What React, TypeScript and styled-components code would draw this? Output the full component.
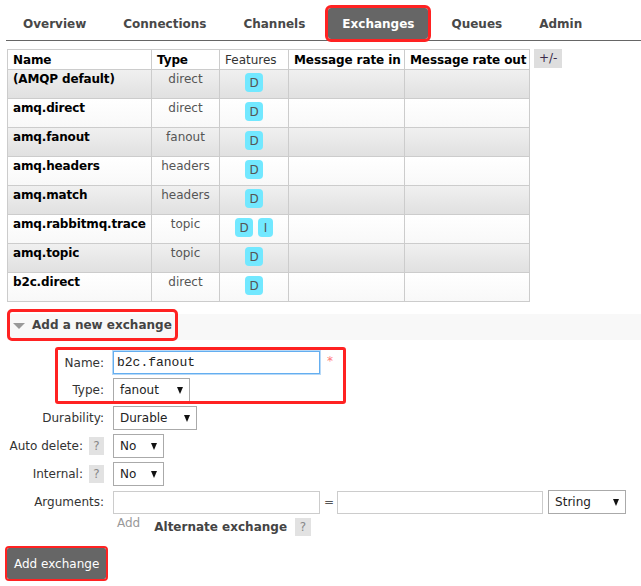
import React from 'react';
import styled, { createGlobalStyle } from 'styled-components';

const GlobalStyle = createGlobalStyle`
  html, body { margin: 0; padding: 0; background: #fff; }
  body {
    font-family: "DejaVu Sans", Verdana, sans-serif;
    font-size: 12px;
    color: #484848;
  }
  * { box-sizing: border-box; }
`;

const Page = styled.div`
  width: 641px;
  height: 586px;
  overflow: hidden;
`;

const Nav = styled.ul`
  list-style: none;
  margin: 0 0 0 6px;
  padding: 8px 0 0 3px;
  height: 41px;
  display: flex;
  align-items: flex-start;
  gap: 9px;
  border-bottom: 1px solid #666;
`;

const Tab = styled.li<{ $active?: boolean }>`
  height: 31px;
  line-height: 33px;
  padding: 0 14px;
  font-weight: bold;
  color: ${(p) => (p.$active ? '#fff' : '#484848')};
  background: ${(p) => (p.$active ? '#666' : 'transparent')};
  outline: ${(p) => (p.$active ? '3px solid #f22' : 'none')};
  border-radius: ${(p) => (p.$active ? '3px' : '0')};
`;

const TableArea = styled.div`
  display: flex;
  align-items: flex-start;
  gap: 4px;
  margin: 8px 0 0 7px;
`;

const Table = styled.table`
  border-collapse: collapse;
  table-layout: fixed;
  width: 523px;
`;

const HeadCell = styled.th<{ $plain?: boolean }>`
  border: 1px solid #ccc;
  padding: 0 5px;
  height: 20px;
  text-align: left;
  font-weight: ${(p) => (p.$plain ? 'normal' : 'bold')};
  color: ${(p) => (p.$plain ? '#333' : '#000')};
  letter-spacing: ${(p) => (p.$plain ? '0' : '-0.1px')};
  white-space: nowrap;
  background: #fff;
`;

const Row = styled.tr<{ $alt: boolean }>`
  background: ${(p) =>
    p.$alt
      ? 'linear-gradient(to bottom, #f0f0f0 0%, #e0e0e0 100%)'
      : 'linear-gradient(to bottom, #ffffff 0%, #f8f8f8 100%)'};
`;

const Cell = styled.td<{ $align?: string }>`
  border: 1px solid #ccc;
  height: 29px;
  padding: 2px 5px 0;
  vertical-align: top;
  text-align: ${(p) => p.$align || 'left'};
`;

const NameText = styled.span`
  font-weight: bold;
  color: #000;
  letter-spacing: -0.15px;
  white-space: nowrap;
`;

const TypeText = styled.span`
  color: #555;
`;

const Badges = styled.div`
  display: flex;
  justify-content: center;
  gap: 5px;
  padding-top: 1px;
`;

const Badge = styled.span<{ $w: number }>`
  display: inline-flex;
  align-items: center;
  justify-content: center;
  width: ${(p) => p.$w}px;
  height: 19px;
  border-radius: 4px;
  background: #72e8ff;
  color: #555;
`;

const ToggleCols = styled.span`
  background: #dedede;
  color: #3a2a4a;
  height: 19px;
  line-height: 19px;
  padding: 0 5px;
`;

const SectionBar = styled.div`
  display: flex;
  height: 26px;
  margin: 12px 0 0 7px;
  background: #f8f8f8;
`;

const SectionTitle = styled.h2`
  margin: -2px 0 0 3px;
  height: 26px;
  padding: 0 3px 0 3px;
  display: flex;
  align-items: center;
  gap: 7px;
  font-size: 12px;
  font-weight: bold;
  color: #444;
  outline: 3px solid #f22;
  border-radius: 2px;
`;

const Caret = styled.span`
  width: 0;
  height: 0;
  border-left: 6px solid transparent;
  border-right: 6px solid transparent;
  border-top: 6px solid #999;
  margin-top: 2px;
`;

const Form = styled.div`
  display: flex;
  flex-direction: column;
  gap: 4px;
  margin-top: 11px;
`;

const HighlightGroup = styled.div`
  position: relative;
  display: flex;
  flex-direction: column;
  gap: 4px;
  &::after {
    content: '';
    position: absolute;
    left: 55px;
    top: -4px;
    width: 285px;
    bottom: -2px;
    border: 3px solid #f22;
    border-radius: 3px;
    pointer-events: none;
  }
`;

const FormRow = styled.div`
  display: grid;
  grid-template-columns: 104px auto;
  column-gap: 9px;
  align-items: center;
  min-height: 23px;
`;

const Label = styled.div`
  display: flex;
  justify-content: flex-end;
  align-items: center;
  gap: 6px;
  color: #333;
  white-space: nowrap;
`;

const Controls = styled.div`
  display: flex;
  align-items: center;
`;

const NameInput = styled.input`
  width: 207px;
  height: 23px;
  border: 1px solid #64aef0;
  box-shadow: 0 0 0 1px #b7d9f7;
  padding: 0 3px;
  font-family: "Liberation Mono", "Courier New", monospace;
  font-size: 13px;
  color: #222;
  outline: none;
`;

const TextInput = styled.input<{ $w: number }>`
  width: ${(p) => p.$w}px;
  height: 23px;
  border: 1px solid #ccc;
  padding: 0 3px;
  font-family: "DejaVu Sans", Verdana, sans-serif;
  font-size: 12px;
  outline: none;
`;

const Required = styled.span`
  align-self: flex-start;
  margin: 3px 0 0 7px;
  color: #f77;
  font-size: 12px;
`;

const Select = styled.div<{ $w: number }>`
  width: ${(p) => p.$w}px;
  height: 24px;
  border: 1px solid #aaa;
  background: #fff;
  display: flex;
  align-items: center;
  justify-content: space-between;
  padding: 0 6px;
  color: #222;
`;

const Arrow = styled.span`
  width: 0;
  height: 0;
  border-left: 3.5px solid transparent;
  border-right: 3.5px solid transparent;
  border-top: 7px solid #111;
`;

const Help = styled.span<{ $w?: number }>`
  display: inline-flex;
  align-items: center;
  justify-content: center;
  width: ${(p) => p.$w || 15}px;
  height: 18px;
  background: #e2e2e2;
  color: #888;
`;

const Equals = styled.span`
  margin: 0 3px 0 4px;
  color: #555;
`;

const Spaced = styled.div`
  margin-left: 5px;
`;

const ExtrasRow = styled.div`
  display: flex;
  align-items: center;
  height: 19px;
  margin-top: 3px;
  padding-left: 117px;
`;

const AddLink = styled.span`
  align-self: flex-start;
  margin-top: -1px;
  color: #999;
`;

const AltLabel = styled.span`
  margin: 0 8px 0 14px;
  font-weight: bold;
  color: #444;
`;

const SubmitButton = styled.button`
  margin: 12px 0 0 7px;
  height: 31px;
  padding: 0 7px;
  border: 0;
  border-radius: 2px;
  background: #666;
  color: #fff;
  font-family: "DejaVu Sans", Verdana, sans-serif;
  font-size: 12px;
  outline: 2px solid #f22;
  outline-offset: 0;
`;

const tabs = ['Overview', 'Connections', 'Channels', 'Exchanges', 'Queues', 'Admin'];

const exchanges: { name: string; type: string; features: string[] }[] = [
  { name: '(AMQP default)', type: 'direct', features: ['D'] },
  { name: 'amq.direct', type: 'direct', features: ['D'] },
  { name: 'amq.fanout', type: 'fanout', features: ['D'] },
  { name: 'amq.headers', type: 'headers', features: ['D'] },
  { name: 'amq.match', type: 'headers', features: ['D'] },
  { name: 'amq.rabbitmq.trace', type: 'topic', features: ['D', 'I'] },
  { name: 'amq.topic', type: 'topic', features: ['D'] },
  { name: 'b2c.direct', type: 'direct', features: ['D'] },
];

function SelectBox({ value, w }: { value: string; w: number }) {
  return (
    <Select $w={w}>
      <span>{value}</span>
      <Arrow />
    </Select>
  );
}

export default function App() {
  return (
    <Page>
      <GlobalStyle />
      <Nav>
        {tabs.map((t) => (
          <Tab key={t} $active={t === 'Exchanges'}>
            {t}
          </Tab>
        ))}
      </Nav>

      <TableArea>
        <Table>
          <colgroup>
            <col style={{ width: 144 }} />
            <col style={{ width: 68 }} />
            <col style={{ width: 69 }} />
            <col style={{ width: 116 }} />
            <col style={{ width: 125 }} />
          </colgroup>
          <thead>
            <tr>
              <HeadCell>Name</HeadCell>
              <HeadCell>Type</HeadCell>
              <HeadCell $plain>Features</HeadCell>
              <HeadCell>Message rate in</HeadCell>
              <HeadCell>Message rate out</HeadCell>
            </tr>
          </thead>
          <tbody>
            {exchanges.map((ex, i) => (
              <Row key={ex.name} $alt={i % 2 === 0}>
                <Cell>
                  <NameText>{ex.name}</NameText>
                </Cell>
                <Cell $align="center">
                  <TypeText>{ex.type}</TypeText>
                </Cell>
                <Cell>
                  <Badges>
                    {ex.features.map((f) => (
                      <Badge key={f} $w={f === 'I' ? 15 : 18}>
                        {f}
                      </Badge>
                    ))}
                  </Badges>
                </Cell>
                <Cell />
                <Cell />
              </Row>
            ))}
          </tbody>
        </Table>
        <ToggleCols>+/-</ToggleCols>
      </TableArea>

      <SectionBar>
        <SectionTitle>
          <Caret />
          Add a new exchange
        </SectionTitle>
      </SectionBar>

      <Form>
        <HighlightGroup>
          <FormRow>
            <Label>Name:</Label>
            <Controls>
              <NameInput defaultValue="b2c.fanout" />
              <Required>*</Required>
            </Controls>
          </FormRow>
          <FormRow>
            <Label>Type:</Label>
            <Controls>
              <SelectBox value="fanout" w={77} />
            </Controls>
          </FormRow>
        </HighlightGroup>
        <FormRow>
          <Label>Durability:</Label>
          <Controls>
            <SelectBox value="Durable" w={84} />
          </Controls>
        </FormRow>
        <FormRow>
          <Label>
            Auto delete:<Help>?</Help>
          </Label>
          <Controls>
            <SelectBox value="No" w={51} />
          </Controls>
        </FormRow>
        <FormRow>
          <Label>
            Internal:<Help>?</Help>
          </Label>
          <Controls>
            <SelectBox value="No" w={51} />
          </Controls>
        </FormRow>
        <FormRow>
          <Label>Arguments:</Label>
          <Controls>
            <TextInput $w={207} />
            <Equals>=</Equals>
            <TextInput $w={206} />
            <Spaced>
              <SelectBox value="String" w={78} />
            </Spaced>
          </Controls>
        </FormRow>
      </Form>
      <ExtrasRow>
        <AddLink>Add</AddLink>
        <AltLabel>Alternate exchange</AltLabel>
        <Help $w={16}>?</Help>
      </ExtrasRow>
      <SubmitButton>Add exchange</SubmitButton>
    </Page>
  );
}
